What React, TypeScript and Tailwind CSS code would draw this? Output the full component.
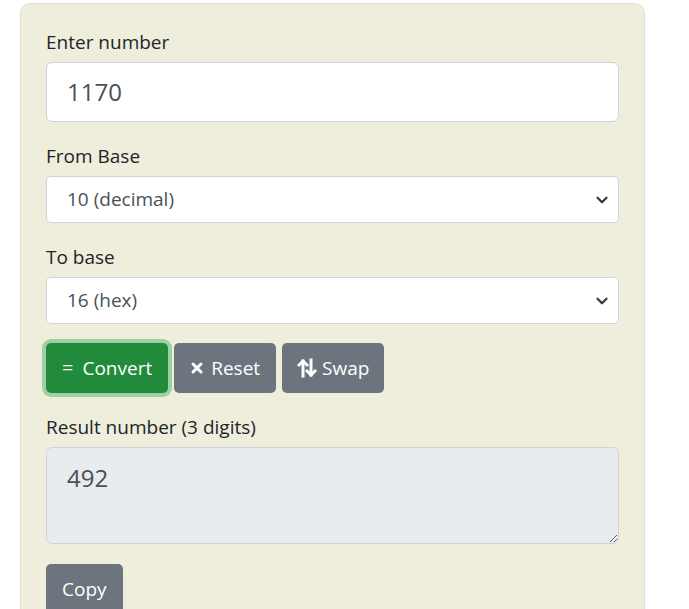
import { ChevronDown } from 'lucide-react'

const font = { fontFamily: '"Open Sans", "Noto Sans", Arial, sans-serif' }

function Label({ children }: { children: React.ReactNode }) {
  return <label className="block text-[19px] leading-[28px] text-[#212529] mb-[6px]">{children}</label>
}

function Select({ value }: { value: string }) {
  return (
    <div className="relative">
      <div className="h-[47px] w-full rounded-[5px] border border-[#ced4da] bg-white pl-[20px] flex items-center text-[19px] text-[#495057]">
        {value}
      </div>
      <ChevronDown className="absolute right-[8px] top-1/2 -translate-y-1/2 h-[18px] w-[18px] text-[#343a40]" strokeWidth={3} />
    </div>
  )
}

function SwapIcon() {
  return (
    <svg width="20" height="20" viewBox="0 0 20 20" fill="none" stroke="currentColor" strokeWidth="3" strokeLinecap="square">
      <path d="M6 18V3" />
      <path d="M2 7l4-4 4 4" />
      <path d="M14 2v15" />
      <path d="M10 13l4 4 4-4" />
    </svg>
  )
}

export default function App() {
  return (
    <div className="min-h-screen bg-white pl-[20px] pt-[3px]" style={font}>
      <div className="w-[625px] rounded-[10px] border border-[#e2e0cf] bg-[#efeddc] px-[25px] pt-[24px] pb-[30px]">
        <Label>Enter number</Label>
        <div className="h-[60px] rounded-[6px] border border-[#ced4da] bg-white pl-[20px] flex items-center text-[24px] text-[#495057] mb-[20px]">
          1170
        </div>

        <Label>From Base</Label>
        <div className="mb-[20px]">
          <Select value="10 (decimal)" />
        </div>

        <Label>To base</Label>
        <div className="mb-[19px]">
          <Select value="16 (hex)" />
        </div>

        <div className="flex items-center gap-[6px] mb-[20px]">
          <button className="h-[50px] px-[16px] rounded-[5px] bg-[#228b3b] text-white text-[19px] flex items-center gap-[9px] ring-4 ring-[#9fd0a5]">
            <span className="text-[20px]">=</span>
            Convert
          </button>
          <button className="h-[50px] px-[16px] rounded-[5px] bg-[#6c757d] text-white text-[19px] flex items-center gap-[7px]">
            <svg width="14" height="14" viewBox="0 0 14 14" stroke="currentColor" strokeWidth="3" strokeLinecap="round">
              <path d="M3 3l8 8M11 3l-8 8" />
            </svg>
            Reset
          </button>
          <button className="h-[50px] px-[15px] rounded-[5px] bg-[#6c757d] text-white text-[19px] flex items-center gap-[5px]">
            <SwapIcon />
            Swap
          </button>
        </div>

        <Label>Result number (3 digits)</Label>
        <textarea
          readOnly
          value="492"
          className="block w-full h-[97px] rounded-[6px] border border-[#ced4da] bg-[#e9ecef] px-[20px] pt-[12px] text-[24px] text-[#495057] mb-[20px] outline-none"
        />

        <button className="h-[50px] px-[16px] rounded-[5px] bg-[#6c757d] text-white text-[19px]">
          Copy
        </button>
      </div>
    </div>
  )
}
